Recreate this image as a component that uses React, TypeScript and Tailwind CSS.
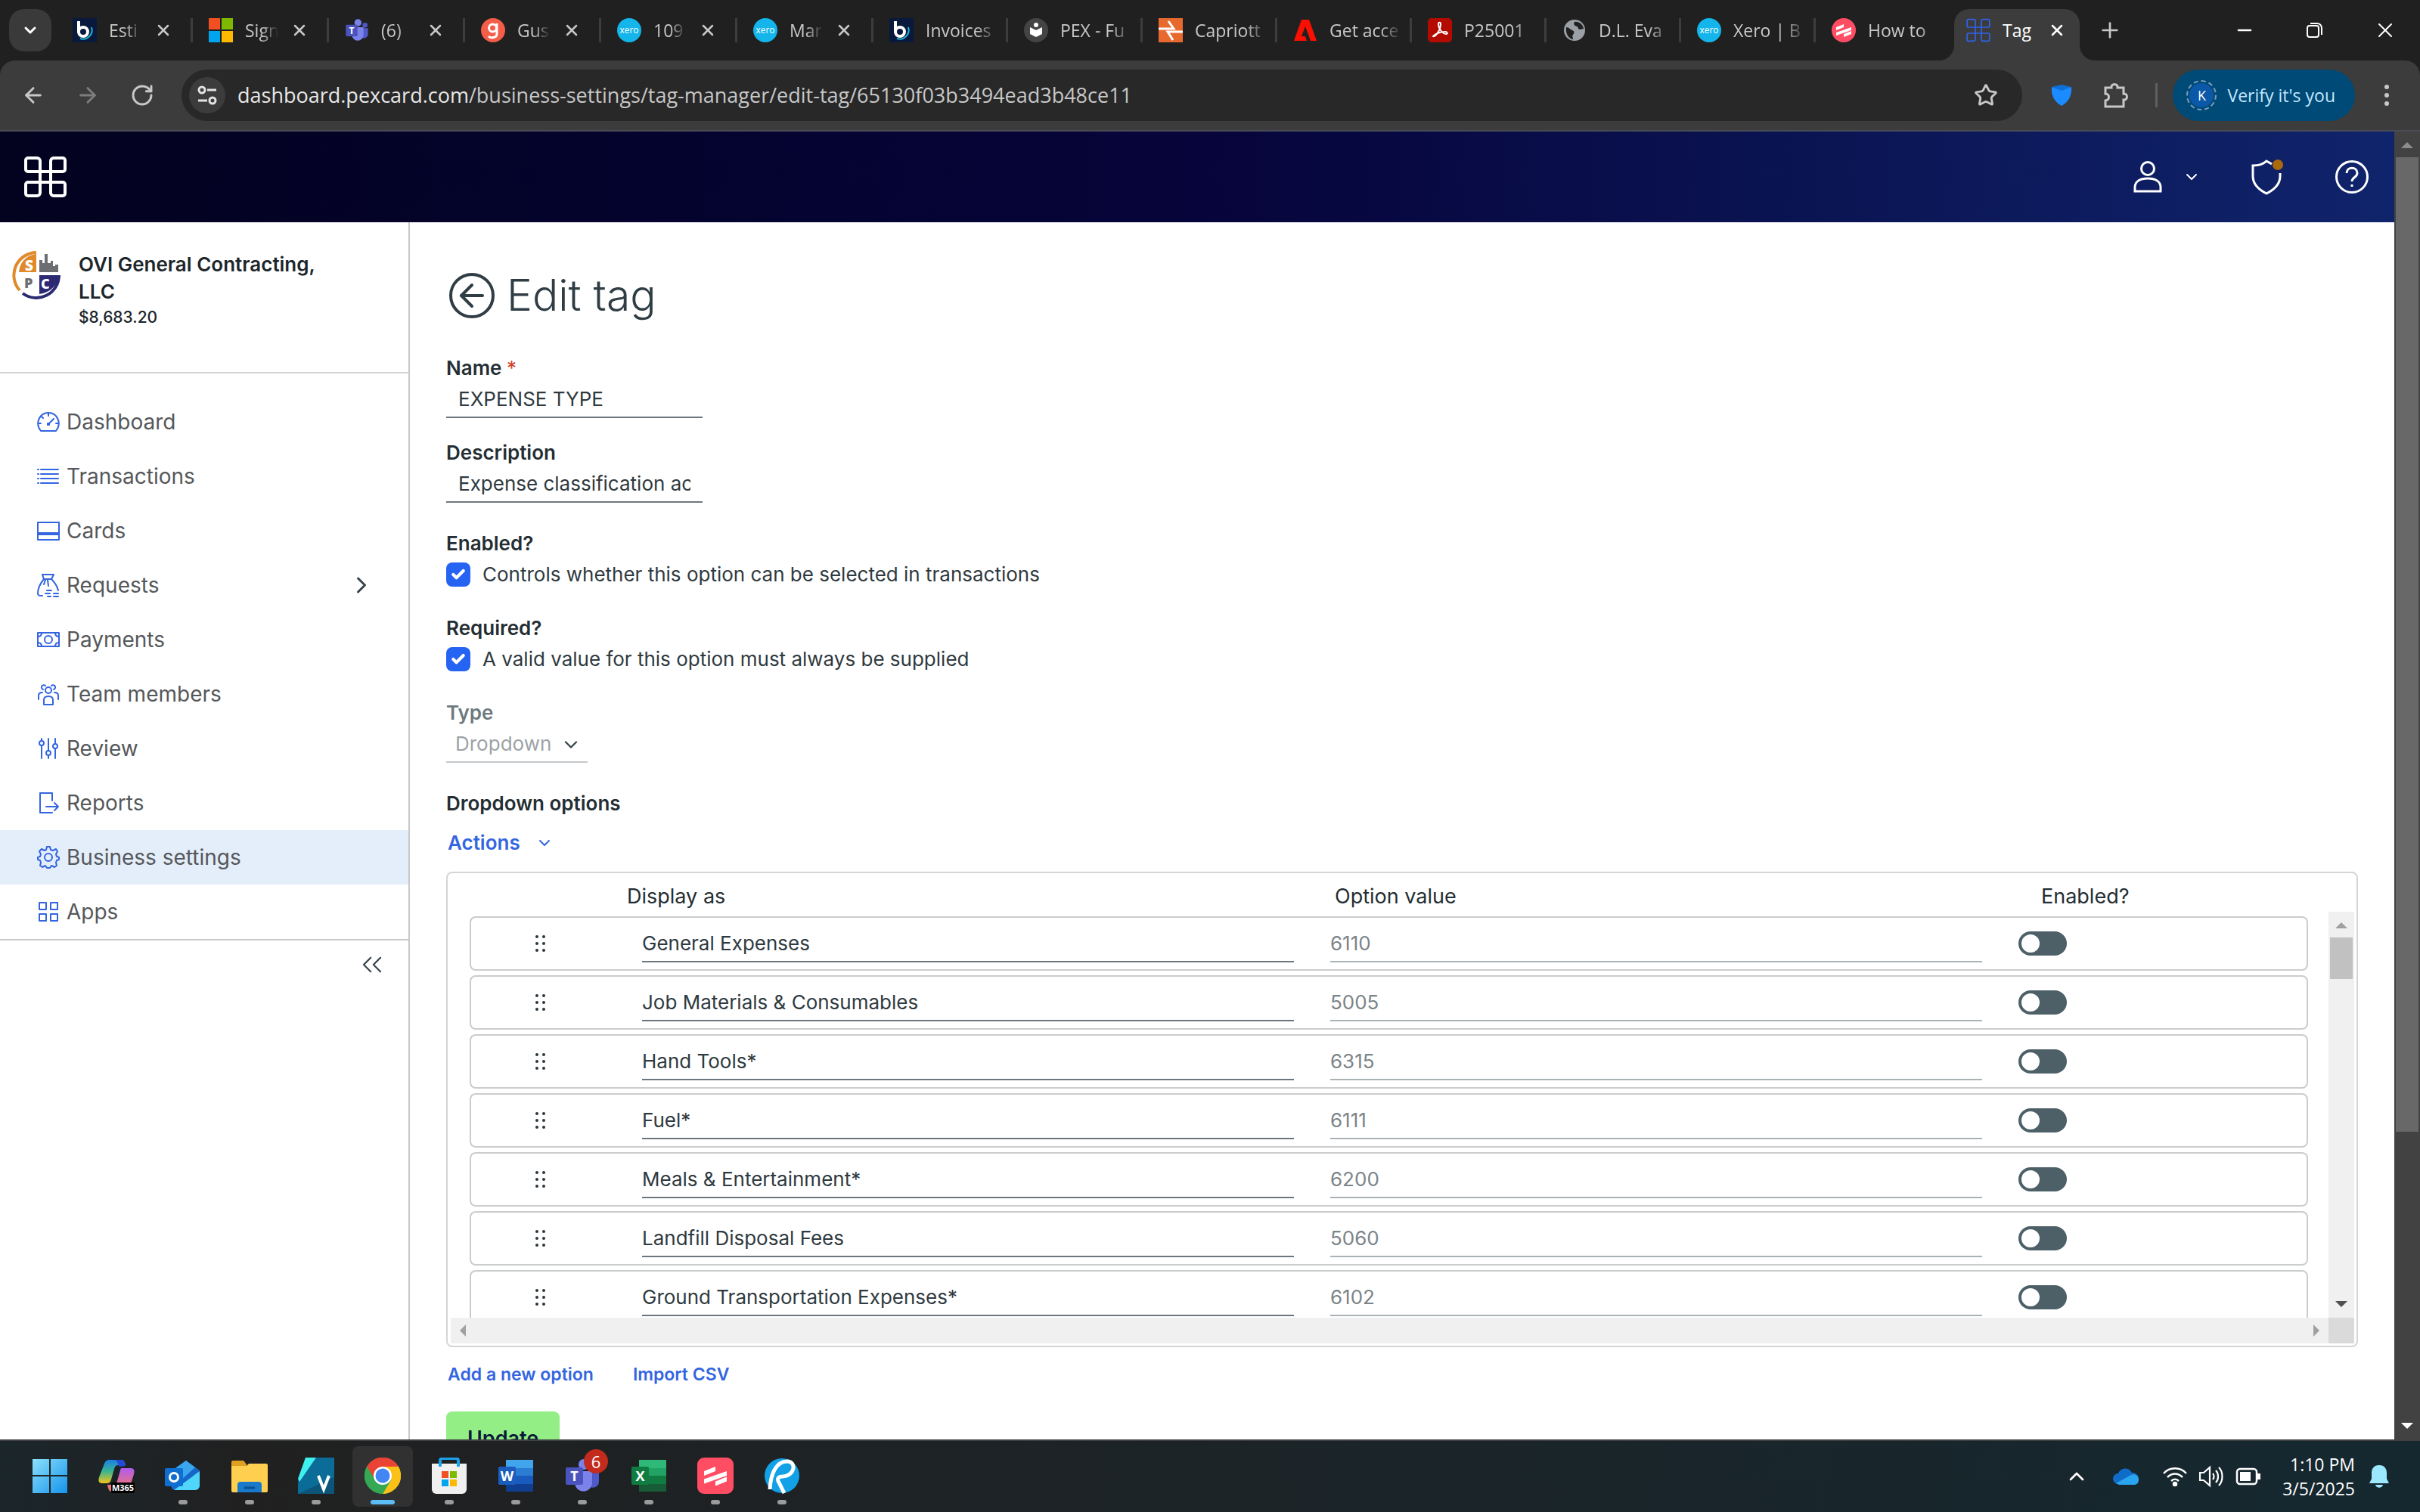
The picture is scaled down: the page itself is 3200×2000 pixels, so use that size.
import { useState, type ReactNode } from 'react';
import {
  ArrowLeft,
  ArrowRight,
  Check,
  ChevronDown,
  ChevronRight,
  ChevronUp,
  ChevronsLeft,
  Minus,
  Plus,
  RotateCw,
  Star,
  X,
} from 'lucide-react';

interface BrowserTab {
  title: string;
  icon: ReactNode;
  closable?: boolean;
}

interface TagOption {
  name: string;
  value: string;
}

/* ---------- logos ---------- */

function PexLogo({ className, strokeWidth = 3 }: { className?: string; strokeWidth?: number }) {
  return (
    <svg viewBox="0 0 56 54" fill="none" stroke="currentColor" strokeWidth={strokeWidth} className={className}>
      <path d="M21 20H5a3 3 0 0 1-3-3V5a3 3 0 0 1 3-3h12a4 4 0 0 1 4 4z" />
      <path d="M35 20h16a3 3 0 0 0 3-3V5a3 3 0 0 0-3-3H39a4 4 0 0 0-4 4z" />
      <path d="M21 34H5a3 3 0 0 0-3 3v12a3 3 0 0 0 3 3h12a4 4 0 0 0 4-4z" />
      <path d="M35 34h16a3 3 0 0 1 3 3v12a3 3 0 0 1-3 3H39a4 4 0 0 1-4-4z" />
      <path d="M21 20h14v14H21z" />
    </svg>
  );
}

function BluebeamIcon() {
  return (
    <svg viewBox="0 0 32 32" className="size-8">
      <rect width="32" height="32" fill="#08193d" />
      <path d="M10 27c9 3 18-5 15-15" fill="none" stroke="#1fb5d6" strokeWidth="2" />
      <path d="M8 4v15" stroke="#fff" strokeWidth="4" />
      <circle cx="14" cy="18" r="6" fill="none" stroke="#fff" strokeWidth="4" />
    </svg>
  );
}

function MicrosoftIcon() {
  return (
    <svg viewBox="0 0 32 32" className="size-8">
      <path d="M0 0h15v15H0z" fill="#f25022" />
      <path d="M17 0h15v15H17z" fill="#7fba00" />
      <path d="M0 17h15v15H0z" fill="#00a4ef" />
      <path d="M17 17h15v15H17z" fill="#ffb900" />
    </svg>
  );
}

function TeamsIcon({ className = 'size-8' }: { className?: string }) {
  return (
    <svg viewBox="0 0 48 48" className={className}>
      <circle cx="40" cy="14" r="5" fill="#5059c9" />
      <path d="M33 20h13v12a8 8 0 0 1-13 6z" fill="#5059c9" />
      <circle cx="26" cy="9" r="7" fill="#7b83eb" />
      <path d="M14 18h23v15a11.500 11.500 0 0 1-23 0z" fill="#7b83eb" />
      <rect x="2" y="13" width="23" height="23" rx="2" fill="#4b53bc" />
      <text x="13.500" y="31" textAnchor="middle" fontSize="18" fontWeight="700" fill="#fff" fontFamily="Open Sans, sans-serif">T</text>
    </svg>
  );
}

function GustoIcon() {
  return (
    <svg viewBox="0 0 32 32" className="size-8">
      <circle cx="16" cy="16" r="16" fill="#f45d48" />
      <circle cx="15.500" cy="13" r="5" fill="none" stroke="#fff" strokeWidth="3" />
      <path d="M21 7v14c0 5-8 6-11 3" fill="none" stroke="#fff" strokeWidth="3" />
    </svg>
  );
}

function XeroIcon() {
  return (
    <svg viewBox="0 0 32 32" className="size-8">
      <circle cx="16" cy="16" r="16" fill="#13b5ea" />
      <text x="16" y="20" textAnchor="middle" fontSize="12" fill="#fff" fontFamily="Open Sans, sans-serif">xero</text>
    </svg>
  );
}

function ReaderIcon() {
  return (
    <svg viewBox="0 0 32 32" className="size-8">
      <circle cx="16" cy="16" r="16" fill="#444" />
      <circle cx="16" cy="9" r="3" fill="#fff" />
      <path d="M8 12l8 4 8-4v9l-8 4-8-4z" fill="#fff" />
    </svg>
  );
}

function CapriottisIcon() {
  return (
    <svg viewBox="0 0 32 32" className="size-8">
      <rect width="32" height="32" fill="#e8692d" />
      <path d="M0 14h20L13 4M32 18H12l7 11" fill="none" stroke="#fff" strokeWidth="3" />
    </svg>
  );
}

function AdobeIcon() {
  return (
    <svg viewBox="0 0 32 32" className="size-8">
      <path d="M11 2h10l10 28H1z" fill="#fa0f00" />
      <path d="M16 11l7 19h-5l-2-6h-5z" fill="#202020" />
    </svg>
  );
}

function AcrobatIcon() {
  return (
    <svg viewBox="0 0 32 32" className="size-8">
      <rect width="32" height="32" rx="5" fill="#b30b00" />
      <path
        d="M7 24c3 2 10-9 10-16 0-3-3-3-3 0 0 6 6 13 10 13 3 0 2-3-1-3-5 0-12 2-16 6z"
        fill="none"
        stroke="#fff"
        strokeWidth="2"
      />
    </svg>
  );
}

function GlobeIcon() {
  return (
    <svg viewBox="0 0 32 32" className="size-8">
      <circle cx="16" cy="16" r="14" fill="#9aa0a6" />
      <path d="M5 12c4 0 5 3 8 4s3 4 1 6 1 5 0 6C8 27 4 21 5 12zM16 5c-2 3 0 5 3 6s1 4 4 4 4-2 5 0c0-6-6-11-12-10z" fill="#202020" />
    </svg>
  );
}

function ScribeIcon({ round = false, className = 'size-8' }: { round?: boolean; className?: string }) {
  return (
    <svg viewBox="0 0 32 32" className={className}>
      <rect width="32" height="32" rx={round ? 16 : 6} fill="#ff4d64" />
      <path d="M6 12l10-4v4L6 16zM6 19l20-7v4L6 23zM16 21l10-4v4l-10 4z" fill="#fff" />
    </svg>
  );
}

/* ---------- browser ---------- */

const browserTabs: BrowserTab[] = [
  { title: 'Esti', icon: <BluebeamIcon />, closable: true },
  { title: 'Sign', icon: <MicrosoftIcon />, closable: true },
  { title: '(6)', icon: <TeamsIcon />, closable: true },
  { title: 'Gus', icon: <GustoIcon />, closable: true },
  { title: '109', icon: <XeroIcon />, closable: true },
  { title: 'Mar', icon: <XeroIcon />, closable: true },
  { title: 'Invoices', icon: <BluebeamIcon /> },
  { title: 'PEX - Fu', icon: <ReaderIcon /> },
  { title: 'Capriott', icon: <CapriottisIcon /> },
  { title: 'Get acce', icon: <AdobeIcon /> },
  { title: 'P25001', icon: <AcrobatIcon /> },
  { title: 'D.L. Eva', icon: <GlobeIcon /> },
  { title: 'Xero | B', icon: <XeroIcon /> },
  { title: 'How to', icon: <ScribeIcon round /> },
];

function TabStrip() {
  return (
    <div className="flex h-20 shrink-0 items-center bg-[#202020] pl-3 text-[#c8c8c8]">
      <button aria-label="Search tabs" className="flex size-14 items-center justify-center rounded-[20px] bg-[#3a3a3a]">
        <ChevronDown className="size-6 text-white" strokeWidth={3} />
      </button>
      <div className="ml-[7px] flex items-center">
        {browserTabs.map((tab, index) => (
          <div
            key={index}
            className={`flex h-8 items-center pl-[21px] ${tab.closable ? 'w-[180px]' : 'w-[178px]'} ${
              index < browserTabs.length - 1 ? 'border-r-[3px] border-[#3d3d3d]' : ''
            }`}
          >
            {tab.icon}
            <span
              className={`ml-4 whitespace-nowrap text-[23px] ${
                tab.closable
                  ? 'w-11 [mask-image:linear-gradient(to_right,black_50%,transparent)]'
                  : 'w-24 [mask-image:linear-gradient(to_right,black_70%,transparent)]'
              }`}
            >
              {tab.title}
            </span>
            {tab.closable && (
              <button aria-label="Close tab" className="ml-4">
                <X className="size-6" strokeWidth={2.5} />
              </button>
            )}
          </div>
        ))}
      </div>
      <div className="relative ml-[5px] flex h-[68px] w-[166px] items-center self-end rounded-t-[20px] bg-[#3c3c3c] pb-3 pl-4 text-white">
        <svg viewBox="0 0 20 20" className="absolute bottom-0 -left-5 size-5">
          <path d="M20 0v20H0A20 20 0 0 0 20 0z" fill="#3c3c3c" />
        </svg>
        <svg viewBox="0 0 20 20" className="absolute -right-5 bottom-0 size-5">
          <path d="M0 0v20h20A20 20 0 0 1 0 0z" fill="#3c3c3c" />
        </svg>
        <PexLogo className="size-8 text-[#2f62ea]" />
        <span className="ml-4 w-11 whitespace-nowrap text-[23px]">Tag</span>
        <button aria-label="Close tab" className="ml-4">
          <X className="size-6" strokeWidth={2.5} />
        </button>
      </div>
      <button aria-label="New tab" className="ml-6">
        <Plus className="size-8" />
      </button>
      <div className="ml-auto flex items-center gap-16 pr-[30px] text-white">
        <button aria-label="Minimize"><Minus className="size-7" strokeWidth={2} /></button>
        <button aria-label="Restore">
          <svg viewBox="0 0 28 28" fill="none" stroke="currentColor" strokeWidth="2" className="size-7">
            <rect x="5" y="8" width="15" height="15" rx="3" />
            <path d="M9 5h9a6 6 0 0 1 6 6v9" />
          </svg>
        </button>
        <button aria-label="Close"><X className="size-8" strokeWidth={1.5} /></button>
      </div>
    </div>
  );
}

function Toolbar() {
  return (
    <div className="bg-[#202020]">
      <div className="flex h-[94px] items-center rounded-t-[20px] border-b-2 border-[#4a4c55] bg-[#3c3c3c] pl-7 text-[#c7c7c7]">
        <button aria-label="Back"><ArrowLeft className="size-8" strokeWidth={2.2} /></button>
        <button aria-label="Forward" className="ml-10 text-[#7d7d7d]"><ArrowRight className="size-8" strokeWidth={2.2} /></button>
        <button aria-label="Reload" className="ml-10"><RotateCw className="size-8" strokeWidth={2.2} /></button>
        <div className="ml-9 flex h-[68px] flex-1 items-center rounded-full bg-[#282828] pr-8 pl-[10px]">
          <button aria-label="Site information" className="flex size-12 items-center justify-center rounded-full bg-[#3c3c3c]">
            <svg viewBox="0 0 28 28" fill="none" stroke="#e3e3e3" strokeWidth="3" className="size-7">
              <circle cx="7" cy="7" r="4" />
              <path d="M14 7h12M2 21h12" />
              <circle cx="21" cy="21" r="4" />
            </svg>
          </button>
          <div className="ml-4 flex-1 text-[27px] whitespace-nowrap">
            <span className="text-[#e8e8e8]">dashboard.pexcard.com</span>
            /business-settings/tag-manager/edit-tag/65130f03b3494ead3b48ce11
          </div>
          <button aria-label="Bookmark"><Star className="size-8" strokeWidth={2.2} /></button>
        </div>
        <svg viewBox="0 0 32 32" className="ml-9 size-8">
          <path d="M3 5l13 4 13-4c1 12-4 20-13 25C7 25 2 17 3 5z" fill="#1a8cff" />
          <path d="M3 5l13-3 13 3-13 5z" fill="#0f6fd6" />
        </svg>
        <svg viewBox="0 0 32 36" fill="none" stroke="currentColor" strokeWidth="3" className="ml-10 h-9 w-8">
          <path d="M2 8h8c-1-6 9-6 8 0h8v8c6-1 6 9 0 8v9H2v-8c6-1 6-9 0-9z" />
        </svg>
        <span className="ml-9 h-8 w-[3px] bg-[#5f5f5f]" />
        <button className="ml-5 flex h-[68px] items-center rounded-full bg-[#004a77] pr-[26px] pl-[18px] text-[#c2e7ff]">
          <span className="flex size-10 items-center justify-center rounded-full border-2 border-dashed border-[#7c9db8]">
            <span className="flex size-8 items-center justify-center rounded-full bg-[#0b57a8] text-lg text-white">K</span>
          </span>
          <span className="ml-[14px] text-[23px] whitespace-nowrap">Verify it's you</span>
        </button>
        <button aria-label="Menu" className="mr-8 ml-[30px]">
          <svg viewBox="0 0 24 32" fill="currentColor" className="h-8 w-6">
            <circle cx="12" cy="5" r="3" />
            <circle cx="12" cy="16" r="3" />
            <circle cx="12" cy="27" r="3" />
          </svg>
        </button>
      </div>
    </div>
  );
}

/* ---------- dashboard ---------- */

function NavIcon({ children }: { children: ReactNode }) {
  return (
    <svg
      viewBox="0 0 32 32"
      fill="none"
      stroke="#3465e0"
      strokeWidth="2"
      strokeLinecap="round"
      strokeLinejoin="round"
      className="size-8 shrink-0"
    >
      {children}
    </svg>
  );
}

const navItems = [
  {
    label: 'Dashboard',
    icon: <path d="M6 28C-2 18 4 4 16 4s18 14 10 24zM16 4v4M2 18h4M26 18h4M7 9l2 2M16 19l7-7M15 18h2v2h-2z" />,
  },
  {
    label: 'Transactions',
    icon: <path d="M2 7h1M6 7h23M2 13h1M6 13h23M2 19h1M6 19h23M2 25h1M6 25h23" />,
  },
  { label: 'Cards', icon: <><path d="M2 5h28v23H2z" /><path d="M3 20h26" strokeWidth="4" /></> },
  {
    label: 'Requests',
    icon: <path d="M10 8L8 2h15l-3 6zM10 8C5 14 2 20 2 27c0 3 2 3 6 3M20 8c6 6 8 11 9 15M12 9l-2 6M15 9l1 8M14 23h6M12 27h6M15 31h4M23 27h6M23 31h6" />,
  },
  {
    label: 'Payments',
    icon: <><path d="M2 7h28v18H2zM2 12c3 0 5-2 5-5M30 12c-3 0-5-2-5-5M2 20c3 0 5 2 5 5M30 20c-3 0-5 2-5 5" /><circle cx="16" cy="16" r="5" /></>,
  },
  {
    label: 'Team members',
    icon: (
      <>
        <circle cx="16" cy="11" r="4" />
        <path d="M10 30v-6c0-3 2-5 6-5s6 2 6 5v6zM9 10a3 3 0 1 1 3-5M23 10a3 3 0 1 0-3-5M3 23v-5c0-3 2-4 5-4M29 23v-5c0-3-2-4-5-4" />
      </>
    ),
  },
  {
    label: 'Review',
    icon: <><path d="M7 3v3M7 12v17M16 3v16M16 25v4M25 3v7M25 16v13" /><circle cx="7" cy="9" r="3" /><circle cx="16" cy="22" r="3" /><circle cx="25" cy="13" r="3" /></>,
  },
  { label: 'Reports', icon: <path d="M21 13V3H5v26h16M13 21h16M24 16l5 5-5 5" /> },
  {
    label: 'Business settings',
    icon: (
      <>
        <circle cx="16" cy="16" r="5" />
        <path d="M14 2h4l1 4 3 1 4-2 2 3-2 4 1 3 3 1v3l-3 1-1 3 1 4-3 2-4-2-2 3h-4l-2-3-4 2-3-2 1-4-1-3-3-1v-3l3-1 1-3-2-4 3-3 4 2 2-1z" />
      </>
    ),
  },
  { label: 'Apps', icon: <path d="M4 4h9v9H4zM19 4h9v9h-9zM4 19h9v9H4zM19 19h9v9h-9z" /> },
];

function Sidebar() {
  return (
    <aside className="w-[542px] shrink-0 border-r-2 border-[#c8c8c8] bg-white">
      <div className="flex h-[200px] items-start border-b-2 border-[#d4d4d4] pt-[38px] pl-4">
        <svg viewBox="0 0 64 64" className="size-16 shrink-0">
          <path d="M32 2A30 30 0 0 0 10 52" fill="none" stroke="#e08a2c" strokeWidth="4" />
          <path d="M14 56A30 30 0 0 0 62 32" fill="none" stroke="#2b2a72" strokeWidth="4" />
          <path d="M32 4v24H9C10 14 20 5 32 4z" fill="#e08a2c" />
          <path d="M36 32h26c-2 14-12 23-26 25z" fill="#2b2a72" />
          <path d="M36 28V12h4v4h3V4h4v12h4v-3h3v7h3v-2h4v10z" fill="#6d6e71" />
          <text x="17" y="26" fontSize="19" fontWeight="800" fill="#fff" fontFamily="Open Sans, sans-serif">S</text>
          <text x="16" y="49" fontSize="18" fontWeight="800" fill="#6d6e71" fontFamily="Open Sans, sans-serif">P</text>
          <text x="38" y="50" fontSize="18" fontWeight="800" fill="#fff" fontFamily="Open Sans, sans-serif">C</text>
        </svg>
        <div className="ml-6 text-[#1c262b]">
          <p className="w-[340px] text-[26px] leading-9 font-semibold">OVI General Contracting, LLC</p>
          <p className="text-[21px] leading-8 font-medium">$8,683.20</p>
        </div>
      </div>
      <nav className="border-b-2 border-[#c8c8c8] pt-7">
        {navItems.map((item) => (
          <a
            key={item.label}
            href="#"
            className={`flex h-[72px] items-center pr-11 pl-12 text-[28px] text-[#55585b] ${
              item.label === 'Business settings' ? 'bg-[#e4eefa]' : ''
            }`}
          >
            <NavIcon>{item.icon}</NavIcon>
            <span className="ml-2">{item.label}</span>
            {item.label === 'Requests' && <ChevronRight className="ml-auto size-9 text-[#38444a]" />}
          </a>
        ))}
      </nav>
      <div className="flex justify-end pt-[10px] pr-[26px]">
        <button aria-label="Collapse menu"><ChevronsLeft className="size-11 text-[#38444a]" strokeWidth={1.2} /></button>
      </div>
    </aside>
  );
}

const tagOptions: TagOption[] = [
  { name: 'General Expenses', value: '6110' },
  { name: 'Job Materials & Consumables', value: '5005' },
  { name: 'Hand Tools*', value: '6315' },
  { name: 'Fuel*', value: '6111' },
  { name: 'Meals & Entertainment*', value: '6200' },
  { name: 'Landfill Disposal Fees', value: '5060' },
  { name: 'Ground Transportation Expenses*', value: '6102' },
];

function OptionRow({ option }: { option: TagOption }) {
  const [enabled, setEnabled] = useState(false);

  return (
    <tr className="h-[72px]">
      <td className="rounded-l-lg border-2 border-r-0 border-[#cacccd] p-0">
        <svg viewBox="0 0 16 24" fill="#2b363b" className="ml-[84px] h-6 w-4">
          <circle cx="3" cy="3" r="2" /><circle cx="12" cy="3" r="2" />
          <circle cx="3" cy="12" r="2" /><circle cx="12" cy="12" r="2" />
          <circle cx="3" cy="21" r="2" /><circle cx="12" cy="21" r="2" />
        </svg>
      </td>
      <td className="border-y-2 border-[#cacccd] py-0 pr-7 pl-5">
        <input
          aria-label="Display as"
          defaultValue={option.name}
          className="block h-[50px] w-full border-b-2 border-[#6c777d] bg-transparent text-[26px] text-[#2f3a40] outline-none"
        />
      </td>
      <td className="border-y-2 border-[#cacccd] py-0 pr-7 pl-5">
        <input
          aria-label="Option value"
          value={option.value}
          readOnly
          className="block h-[50px] w-full border-b-2 border-[#aab2b6] bg-transparent text-[26px] text-[#7b8488] outline-none"
        />
      </td>
      <td className="rounded-r-lg border-2 border-l-0 border-[#cacccd] py-0 pl-5">
        <input
          type="checkbox"
          role="switch"
          aria-label={`${option.name} enabled`}
          checked={enabled}
          onChange={(e) => setEnabled(e.target.checked)}
          className="flex h-8 w-16 appearance-none items-center rounded-full bg-[#4d6068] px-1 before:size-6 before:rounded-full before:bg-white checked:justify-end checked:bg-[#2563eb]"
        />
      </td>
    </tr>
  );
}

function OptionsTable() {
  return (
    <div className="mt-[22px] rounded-lg border-2 border-[#d3d5d6] pr-[3px] pb-[3px] pl-1">
      <div className="flex h-[588px]">
        <div className="flex-1 overflow-hidden pr-[27px] pl-[25px]">
          <table className="w-full table-fixed border-separate border-spacing-x-0 border-spacing-y-[6px]">
            <thead>
              <tr className="h-[45px] text-left text-[27px] text-[#242e33]">
                <th className="w-[208px] p-0" />
                <th className="p-0 pt-1 leading-8 font-normal">Display as</th>
                <th className="p-0 pt-1 pl-[26px] leading-8 font-normal">Option value</th>
                <th className="w-[403px] p-0 pt-1 pl-[50px] leading-8 font-normal">Enabled?</th>
              </tr>
            </thead>
            <tbody>
              {tagOptions.map((option) => (
                <OptionRow key={option.name} option={option} />
              ))}
            </tbody>
          </table>
        </div>
        <div className="mt-[51px] flex w-[34px] flex-col items-center justify-between bg-[#f0f0f0] pt-[14px] pb-[14px]">
          <div>
            <svg viewBox="0 0 16 8" className="mx-auto h-2 w-4"><path d="M8 0l8 8H0z" fill="#a0a0a0" /></svg>
            <div className="mt-3 h-[55px] w-[30px] bg-[#c1c1c1]" />
          </div>
          <svg viewBox="0 0 16 8" className="h-2 w-4"><path d="M0 0h16L8 8z" fill="#505050" /></svg>
        </div>
      </div>
      <div className="flex h-[34px]">
        <div className="flex flex-1 items-center justify-between bg-[#f0f0f0] px-3">
          <svg viewBox="0 0 8 16" className="h-4 w-2"><path d="M8 0v16L0 8z" fill="#a0a0a0" /></svg>
          <svg viewBox="0 0 8 16" className="h-4 w-2"><path d="M0 0v16l8-8z" fill="#a0a0a0" /></svg>
        </div>
        <div className="w-[34px] bg-[#dadada]" />
      </div>
    </div>
  );
}

function CheckField({ id, title, text }: { id: string; title: string; text: string }) {
  return (
    <div className="text-[26px] leading-8 text-[#2f3a40]">
      <p className="font-semibold text-[#242e33]">{title}</p>
      <div className="flex h-[50px] items-center">
        <span className="relative size-8">
          <input id={id} type="checkbox" defaultChecked className="block size-8 appearance-none rounded-lg bg-[#2563f2]" />
          <Check className="pointer-events-none absolute top-1.5 left-1.5 size-5 text-white" strokeWidth={5} />
        </span>
        <label htmlFor={id} className="ml-4">{text}</label>
      </div>
    </div>
  );
}

function EditTagForm() {
  const [name, setName] = useState('EXPENSE TYPE');
  const [description, setDescription] = useState('Expense classification acc');

  const labelClass = 'block text-[26px] leading-8 font-semibold';
  const inputClass = 'block h-[50px] w-[339px] border-b-2 border-[#6c777d] px-4 text-[26px] text-[#2f3a40] outline-none';

  return (
    <main className="min-w-0 flex-1 overflow-hidden bg-white px-12 pt-[67px] text-[#242e33]">
      <div className="ml-1 flex items-center">
        <button aria-label="Back to tags" className="flex size-[60px] items-center justify-center rounded-full border-4 border-[#2f3d44]">
          <ArrowLeft className="size-12 text-[#2f3d44]" />
        </button>
        <h1 className="ml-4 text-[57px] leading-[60px] font-light text-[#2f3d44]">Edit tag</h1>
      </div>

      <form onSubmit={(e) => e.preventDefault()}>
        <div className="mt-[50px]">
          <label htmlFor="name" className={labelClass}>
            Name <span className="font-normal text-[#d0402b]">*</span>
          </label>
          <input id="name" value={name} onChange={(e) => setName(e.target.value)} className={inputClass} />
        </div>
        <div className="mt-[30px]">
          <label htmlFor="description" className={labelClass}>Description</label>
          <input id="description" value={description} onChange={(e) => setDescription(e.target.value)} className={inputClass} />
        </div>

        <div className="mt-[38px] flex flex-col gap-[30px]">
          <CheckField id="enabled" title="Enabled?" text="Controls whether this option can be selected in transactions" />
          <CheckField id="required" title="Required?" text="A valid value for this option must always be supplied" />
          <div>
            <label htmlFor="type" className={`${labelClass} text-[#6d7a80]`}>Type</label>
            <div className="relative w-[187px]">
              <select id="type" disabled className="block h-[50px] w-full appearance-none border-b-2 border-[#c4c8ca] pl-3 text-[26px] text-[#9da3a6] opacity-100">
                <option>Dropdown</option>
              </select>
              <ChevronDown className="pointer-events-none absolute top-3 right-2 size-7 text-[#38444a]" />
            </div>
          </div>
        </div>

        <h2 className="mt-[38px] text-[26px] leading-8 font-semibold">Dropdown options</h2>
        <button type="button" className="mt-5 flex items-center pl-0.5 text-[26px] leading-8 font-semibold text-[#3465e0]">
          Actions <ChevronDown className="ml-5 size-6" />
        </button>

        <OptionsTable />

        <div className="mt-5 flex gap-[52px] pl-0.5 text-[23px] leading-8 font-semibold text-[#3465e0]">
          <button type="button">Add a new option</button>
          <button type="button">Import CSV</button>
        </div>
        <button type="submit" className="mt-[33px] h-[72px] rounded-lg bg-[#93ef85] px-7 text-[27px] font-semibold text-[#0b1a3a]">
          Update
        </button>
      </form>
    </main>
  );
}

function PageHeader() {
  return (
    <header className="flex h-[120px] shrink-0 items-center bg-linear-to-r from-[#03021f] via-[#06043a] to-[#10246c] pr-8 pl-[31px] text-white">
      <a href="#" aria-label="PEX home"><PexLogo className="h-[54px] w-[58px]" strokeWidth={4} /></a>
      <div className="ml-auto flex items-center">
        <button aria-label="Account" className="flex items-center">
          <svg viewBox="0 0 40 44" fill="none" stroke="currentColor" strokeWidth="3" className="h-11 w-10">
            <circle cx="20" cy="11" r="8.500" />
            <path d="M3 41v-5c0-8 7-12 17-12s17 4 17 12v5z" />
          </svg>
          <ChevronDown className="ml-[26px] size-6" />
        </button>
        <button aria-label="Security" className="ml-16">
          <svg viewBox="0 0 48 48" fill="none" stroke="currentColor" strokeWidth="3" className="size-12">
            <path d="M30 7l-7-4C18 8 12 9 5 9v14c0 11 8 18 18 23 10-5 18-12 18-23v-4" />
            <circle cx="38" cy="8" r="7" fill="#a9690c" stroke="none" />
          </svg>
        </button>
        <button aria-label="Help" className="ml-16">
          <svg viewBox="0 0 48 48" fill="none" stroke="currentColor" strokeWidth="3" className="size-12">
            <circle cx="24" cy="24" r="20.500" />
            <path d="M17 19c0-9 14-9 14 0 0 6-7 5-7 11M24 34v3" />
          </svg>
        </button>
      </div>
    </header>
  );
}

function PageScrollbar() {
  return (
    <div className="flex w-[34px] shrink-0 flex-col items-center bg-[#424242] pt-[14px] pb-[14px]">
      <svg viewBox="0 0 16 8" className="h-2 w-4"><path d="M8 0l8 8H0z" fill="#8c8c8c" /></svg>
      <div className="mt-3 flex w-full flex-1 flex-col px-0.5">
        <div className="h-[77%] bg-[#686868]" />
      </div>
      <svg viewBox="0 0 16 8" className="h-2 w-4"><path d="M0 0h16L8 8z" fill="#fff" /></svg>
    </div>
  );
}

/* ---------- taskbar ---------- */

function OfficeIcon({ letter, tones }: { letter: string; tones: string[] }) {
  return (
    <svg viewBox="0 0 48 48" className="size-12">
      <path d="M11 3h36v11H11z" fill={tones[0]} />
      <path d="M11 14h36v10H11z" fill={tones[1]} />
      <path d="M11 24h36v11H11z" fill={tones[2]} />
      <path d="M11 35h36v10H11z" fill={tones[3]} />
      <rect x="1" y="12" width="23" height="24" rx="2" fill={tones[4]} />
      <text x="12.500" y="31" textAnchor="middle" fontSize="18" fontWeight="700" fill="#fff" fontFamily="Open Sans, sans-serif">{letter}</text>
    </svg>
  );
}

const taskbarApps = [
  {
    name: 'Start',
    running: false,
    icon: (
      <svg viewBox="0 0 48 48" className="size-12">
        <defs>
          <linearGradient id="win" x1="0" y1="0" x2="1" y2="1">
            <stop offset="0" stopColor="#8be0fc" /><stop offset="1" stopColor="#1593ea" />
          </linearGradient>
        </defs>
        <path d="M1 2h22v21H1zM25 2h22v21H25zM1 25h22v22H1zM25 25h22v22H25z" fill="url(#win)" />
      </svg>
    ),
  },
  {
    name: 'M365 Copilot',
    running: false,
    icon: (
      <svg viewBox="0 0 48 48" className="size-12">
        <defs>
          <linearGradient id="cop1" x1="0" y1="0" x2="0" y2="1">
            <stop offset="0" stopColor="#1a7fe8" /><stop offset=".5" stopColor="#3bb68f" /><stop offset="1" stopColor="#f5c518" />
          </linearGradient>
          <linearGradient id="cop2" x1="0" y1="0" x2="0" y2="1">
            <stop offset="0" stopColor="#b05cf0" /><stop offset="1" stopColor="#ff7a59" />
          </linearGradient>
        </defs>
        <path d="M14 3h16c4 0 5 3 6 7H26c-3 0-4 2-5 5l-4 14c-1 4-3 5-7 5H5c-5 0-5-4-4-8L8 8c1-3 3-5 6-5z" fill="url(#cop1)" />
        <path d="M20 3h10c4 0 5 3 6 8l-9 1c-1-5-2-9-7-9z" fill="#2448d8" />
        <path d="M31 14h12c5 0 5 4 4 8l-5 16c-1 4-3 7-7 7H18c-4 0-5-4-6-9h8c3 0 4-2 5-5l4-14c0-2 1-3 2-3z" fill="url(#cop2)" />
        <rect x="17" y="33" width="31" height="14" rx="2" fill="#000" />
        <text x="32.500" y="44" textAnchor="middle" fontSize="11" fontWeight="700" fill="#fff" fontFamily="Open Sans, sans-serif">M365</text>
      </svg>
    ),
  },
  {
    name: 'Outlook',
    running: true,
    icon: (
      <svg viewBox="0 0 48 48" className="size-12">
        <path d="M8 18L28 4l18 13v20a6 6 0 0 1-6 6H14a6 6 0 0 1-6-6z" fill="#1668c8" />
        <path d="M14 14L28 4l12 9-20 18z" fill="#3ba5ee" />
        <path d="M46 18v19a6 6 0 0 1-6 6H12z" fill="#50d5fb" />
        <rect x="0" y="14" width="24" height="24" rx="2" fill="#0f6fd0" />
        <circle cx="12" cy="26" r="5.500" fill="none" stroke="#fff" strokeWidth="3" />
      </svg>
    ),
  },
  {
    name: 'File Explorer',
    running: true,
    icon: (
      <svg viewBox="0 0 48 48" className="size-12">
        <path d="M0 6a2 2 0 0 1 2-2h14l4 5v8H0z" fill="#e0a020" />
        <path d="M0 11h20l3-3h23a2 2 0 0 1 2 2v34a2 2 0 0 1-2 2H2a2 2 0 0 1-2-2z" fill="#ffd04f" />
        <path d="M8 46V36a4 4 0 0 1 4-4h24a4 4 0 0 1 4 4v10z" fill="#1979ca" />
        <path d="M17 40h14" stroke="#0c4f8f" strokeWidth="3" />
      </svg>
    ),
  },
  {
    name: 'Viewpoint',
    running: true,
    icon: (
      <svg viewBox="0 0 48 48" className="size-12">
        <path d="M12 0h36v48H0V30z" fill="#0b5578" />
        <path d="M24 0h24v26L0 48V34z" fill="#0a6c97" />
        <path d="M10 0h14L2 32l-2-4z" fill="#3ff0f0" />
        <path d="M27 24l7 18 7-18" fill="none" stroke="#fff" strokeWidth="4" />
      </svg>
    ),
  },
  {
    name: 'Chrome',
    running: true,
    icon: (
      <svg viewBox="0 0 48 48" className="size-12">
        <circle cx="24" cy="24" r="24" fill="#34a853" />
        <path d="M24 24L3 12a24 24 0 0 1 42 0z" fill="#ea4335" />
        <path d="M24 12h21a24 24 0 0 1-21 36l11-18z" fill="#fbc116" />
        <path d="M3 12l11 18 4-14 6-4z" fill="#ea4335" />
        <path d="M3 12a24 24 0 0 0 21 36l10-18-20-1z" fill="#34a853" />
        <circle cx="24" cy="24" r="12" fill="#fff" />
        <circle cx="24" cy="24" r="9.500" fill="#4285f4" />
      </svg>
    ),
  },
  {
    name: 'Microsoft Store',
    running: true,
    icon: (
      <svg viewBox="0 0 48 48" className="size-12">
        <path d="M12 10V4a3 3 0 0 1 3-3h18a3 3 0 0 1 3 3v6" fill="none" stroke="#1ba1e8" strokeWidth="4" />
        <path d="M1 8h46v34a6 6 0 0 1-6 6H7a6 6 0 0 1-6-6z" fill="#f0f0f0" />
        <path d="M14 18h9v9h-9z" fill="#f25022" /><path d="M25 18h9v9h-9z" fill="#7fba00" />
        <path d="M14 29h9v9h-9z" fill="#00a4ef" /><path d="M25 29h9v9h-9z" fill="#ffb900" />
        <path d="M12 12V6M36 12V6" stroke="#1ba1e8" strokeWidth="4" />
      </svg>
    ),
  },
  { name: 'Word', running: true, icon: <OfficeIcon letter="W" tones={['#41a5ee', '#2b7cd3', '#185abd', '#103f91', '#1a5dbe']} /> },
  { name: 'Teams', running: true, badge: 6, icon: <TeamsIcon className="size-12" /> },
  { name: 'Excel', running: true, icon: <OfficeIcon letter="X" tones={['#2fb979', '#21a366', '#107c41', '#185c37', '#107c41']} /> },
  { name: 'Scribe', running: true, icon: <ScribeIcon className="size-12" /> },
  {
    name: 'Revu',
    running: true,
    icon: (
      <svg viewBox="0 0 48 48" className="size-12">
        <circle cx="24" cy="24" r="23" fill="#12a0e6" />
        <path d="M8 42C9 22 16 5 31 5c12 0 11 19-6 20-6 0-8 3-5 8l7 14" fill="none" stroke="#fff" strokeWidth="5" />
      </svg>
    ),
  },
];

function Taskbar() {
  return (
    <footer className="flex h-24 shrink-0 items-center border-t-2 border-[#3e4043] bg-linear-to-r from-[#1b262b] via-[#202020] via-10% to-[#152830] pr-10 pl-[22px] text-white">
      {taskbarApps.map((app) => (
        <button key={app.name} aria-label={app.name} className="relative flex w-[88px] justify-center">
          <span
            className={`flex h-20 w-20 flex-col items-center justify-end gap-2 rounded-lg pb-[3px] ${
              app.name === 'Chrome' ? 'bg-[#313131]' : ''
            }`}
          >
            {app.icon}
            <span
              className={`h-1.5 rounded-full ${
                app.name === 'Chrome' ? 'w-8 bg-[#5cbcf5]' : app.running ? 'w-3 bg-[#9b9b9b]' : 'w-3'
              }`}
            />
          </span>
          {app.badge && (
            <span className="absolute top-1 right-2.5 flex size-8 items-center justify-center rounded-full bg-[#c42b1c] text-[22px]">
              {app.badge}
            </span>
          )}
        </button>
      ))}
      <div className="ml-auto flex items-center">
        <ChevronUp className="size-8" />
        <svg viewBox="0 0 34 24" className="ml-8 h-6 w-[34px]">
          <path d="M7 22a7 7 0 0 1 0-14c3-8 14-9 18-1a7 7 0 0 1 2 15z" fill="#0f6cc9" />
          <path d="M4 21l20-11c5-2 10 1 10 6s-3 7-6 7H8z" fill="#2aa4ee" />
        </svg>
        <svg viewBox="0 0 32 32" fill="none" stroke="currentColor" strokeWidth="2.500" className="ml-8 size-8">
          <path d="M1 12c8-9 22-9 30 0M6 17c6-6 14-6 20 0M11 22c3-3 7-3 10 0" />
          <circle cx="16" cy="26" r="2" fill="currentColor" />
        </svg>
        <svg viewBox="0 0 32 32" fill="none" stroke="currentColor" strokeWidth="2.200" className="ml-4 size-8">
          <path d="M1 11h5l8-7v24l-8-7H1zM18 12c2 2 2 6 0 8M22 8c4 4 4 12 0 16M26 4c6 6 6 18 0 24" />
        </svg>
        <svg viewBox="0 0 34 24" fill="none" stroke="currentColor" strokeWidth="2.500" className="ml-4 h-6 w-[34px]">
          <rect x="2" y="2" width="26" height="20" rx="4" />
          <rect x="6" y="6" width="14" height="12" fill="currentColor" stroke="none" />
          <path d="M31 8v8" strokeWidth="4" />
        </svg>
        <div className="ml-7 text-right text-[23px] leading-8 whitespace-nowrap">
          <p>1:10 PM</p>
          <p>3/5/2025</p>
        </div>
        <svg viewBox="0 0 28 32" fill="#9be8ff" className="ml-[18px] h-8 w-7">
          <path d="M14 1c7 0 10 5 10 10v8l3 6H1l3-6v-8C4 6 7 1 14 1zM9 27h10c-1 5-9 5-10 0z" />
        </svg>
      </div>
    </footer>
  );
}

export default function App() {
  return (
    <div className="flex h-screen flex-col overflow-hidden font-['Open_Sans','Noto_Sans',sans-serif]">
      <TabStrip />
      <Toolbar />
      <div className="flex min-h-0 flex-1 font-['Inter','Open_Sans',sans-serif]">
        <div className="flex min-w-0 flex-1 flex-col">
          <PageHeader />
          <div className="flex min-h-0 flex-1">
            <Sidebar />
            <EditTagForm />
          </div>
        </div>
        <PageScrollbar />
      </div>
      <Taskbar />
    </div>
  );
}
